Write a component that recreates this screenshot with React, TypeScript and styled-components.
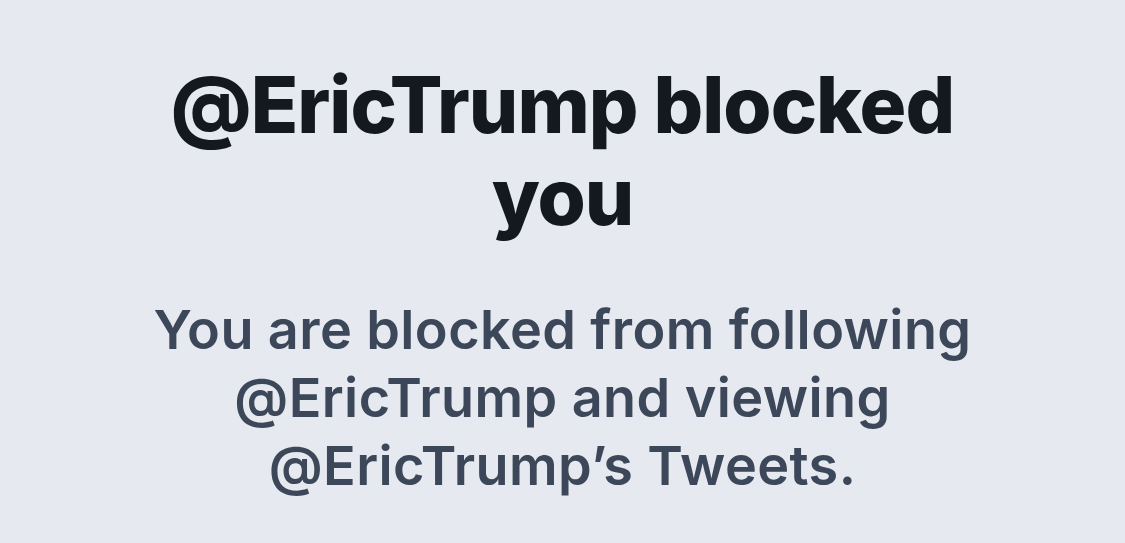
import styled, { createGlobalStyle } from "styled-components";

const GlobalStyle = createGlobalStyle`
  html, body {
    margin: 0;
    padding: 0;
    background: #e6e9ef;
  }
  body {
    font-family: Inter, "Noto Sans", "Liberation Sans", sans-serif;
  }
`;

const Page = styled.div`
  width: 1125px;
  height: 543px;
  box-sizing: border-box;
  padding-top: 59px;
  display: flex;
  flex-direction: column;
  align-items: center;
  background: #e6e9ef;
  overflow: hidden;
`;

const Title = styled.h1`
  margin: 0;
  width: 900px;
  text-align: center;
  font-size: 78px;
  line-height: 92px;
  font-weight: 800;
  letter-spacing: -1px;
  color: #14181f;
`;

const Message = styled.p`
  margin: 53px 0 0;
  width: 1000px;
  text-align: center;
  font-size: 54px;
  line-height: 68px;
  font-weight: 600;
  letter-spacing: 0.4px;
  color: #3c4859;
`;

const App = () => {
  const handle = "@EricTrump";

  return (
    <Page>
      <GlobalStyle />
      <Title>
        {handle} blocked
        <br />
        you
      </Title>
      <Message>
        You are blocked from following
        <br />
        {handle} and viewing
        <br />
        {handle}’s Tweets.
      </Message>
    </Page>
  );
};

export default App;
